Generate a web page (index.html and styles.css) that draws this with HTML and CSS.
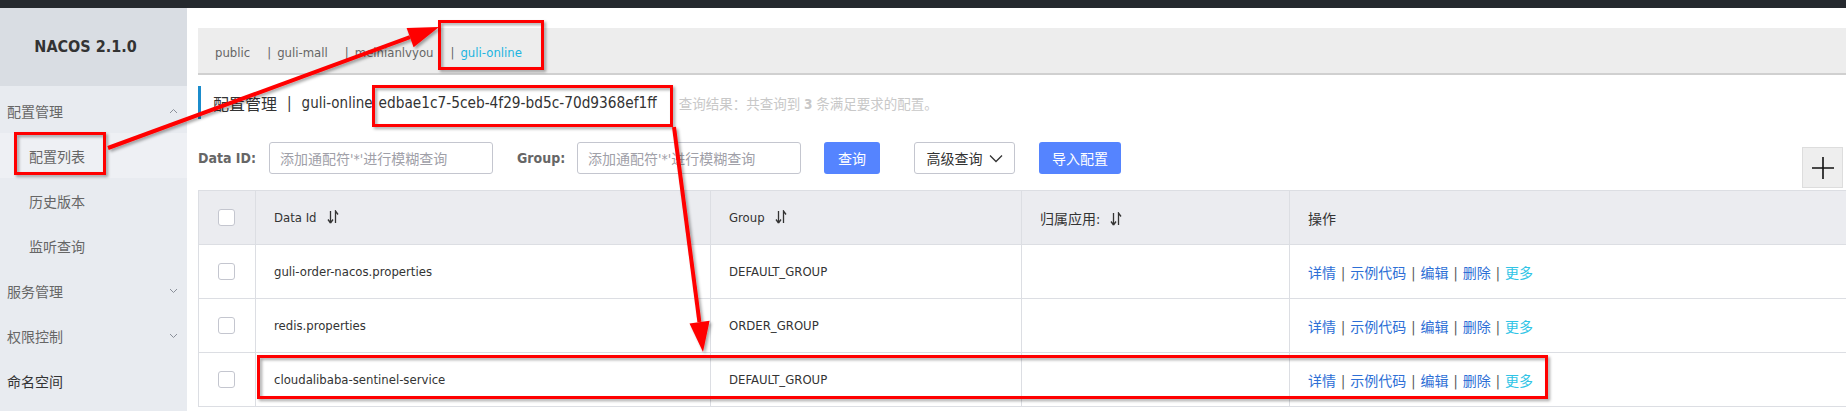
FILE: index.html
```html
<!DOCTYPE html>
<html lang="zh-CN">
<head>
<meta charset="utf-8">
<title>Nacos 配置列表</title>
<link rel="stylesheet" href="styles.css">
</head>
<body>
<div class="topbar"></div>
<div class="layout">
  <aside class="sidebar">
    <div class="logo">NACOS 2.1.0</div>
    <ul class="menu">
      <li class="menu-item"><span>配置管理</span><svg class="chev" width="9" height="6" viewBox="0 0 9 6"><path d="M1 5L4.5 1.5L8 5" fill="none" stroke="#8a8f99" stroke-width="1"/></svg></li>
      <li class="sub-item active">配置列表</li>
      <li class="sub-item">历史版本</li>
      <li class="sub-item">监听查询</li>
      <li class="menu-item"><span>服务管理</span><svg class="chev" width="9" height="6" viewBox="0 0 9 6"><path d="M1 1L4.5 4.5L8 1" fill="none" stroke="#8a8f99" stroke-width="1"/></svg></li>
      <li class="menu-item"><span>权限控制</span><svg class="chev" width="9" height="6" viewBox="0 0 9 6"><path d="M1 1L4.5 4.5L8 1" fill="none" stroke="#8a8f99" stroke-width="1"/></svg></li>
      <li class="menu-item strong"><span>命名空间</span></li>
    </ul>
  </aside>
  <main class="main">
    <div class="ns-tabs">
      <span class="tab">public</span>
      <span class="tab"><span class="sep">|</span>guli-mall</span>
      <span class="tab"><span class="sep">|</span>meihianlvyou</span>
      <span class="tab current"><span class="sep">|</span>guli-online</span>
    </div>
    <div class="page-title">
      <span class="cjk">配置管理</span><span class="title-pipe">|</span><span class="latin">guli-online</span><span class="latin ns-id">edbae1c7-5ceb-4f29-bd5c-70d9368ef1ff</span>
      <span class="result">查询结果：共查询到 <b>3</b> 条满足要求的配置。</span>
    </div>
    <div class="search-row">
      <span class="label label-id">Data ID:</span>
      <span class="input">添加通配符'*'进行模糊查询</span>
      <span class="label label-group">Group:</span>
      <span class="input">添加通配符'*'进行模糊查询</span>
      <span class="btn btn-primary btn-query">查询</span>
      <span class="btn btn-normal btn-advanced">高级查询<svg class="down" width="14" height="9" viewBox="0 0 14 9"><path d="M1 1.5L7 7.5L13 1.5" fill="none" stroke="#333" stroke-width="1.3"/></svg></span>
      <span class="btn btn-primary btn-import">导入配置</span>
      <span class="plus-btn"><svg width="22" height="22" viewBox="0 0 22 22"><path d="M11 0V22M0 11H22" stroke="#111" stroke-width="1.6"/></svg></span>
    </div>
    <table class="config-table">
      <colgroup>
        <col class="c-check"><col class="c-id"><col class="c-group"><col class="c-app"><col class="c-op">
      </colgroup>
      <thead>
        <tr>
          <th><span class="checkbox"></span></th>
          <th>Data Id<svg class="sort" width="12" height="14" viewBox="0 0 12 14"><path d="M3.5 1V13M3.5 13L1 9.5M3.5 13L6 9.5M8.5 13V1L11 4.5" fill="none" stroke="#333" stroke-width="1.3"/></svg></th>
          <th>Group<svg class="sort" width="12" height="14" viewBox="0 0 12 14"><path d="M3.5 1V13M3.5 13L1 9.5M3.5 13L6 9.5M8.5 13V1L11 4.5" fill="none" stroke="#333" stroke-width="1.3"/></svg></th>
          <th class="cjk-cell">归属应用:<svg class="sort" width="12" height="14" viewBox="0 0 12 14"><path d="M3.5 1V13M3.5 13L1 9.5M3.5 13L6 9.5M8.5 13V1L11 4.5" fill="none" stroke="#333" stroke-width="1.3"/></svg></th>
          <th class="cjk-cell">操作</th>
        </tr>
      </thead>
      <tbody>
        <tr>
          <td><span class="checkbox"></span></td>
          <td>guli-order-nacos.properties</td>
          <td>DEFAULT_GROUP</td>
          <td></td>
          <td class="ops"><a>详情</a><span class="bar">|</span><a>示例代码</a><span class="bar">|</span><a>编辑</a><span class="bar">|</span><a>删除</a><span class="bar">|</span><a class="more">更多</a></td>
        </tr>
        <tr>
          <td><span class="checkbox"></span></td>
          <td>redis.properties</td>
          <td>ORDER_GROUP</td>
          <td></td>
          <td class="ops"><a>详情</a><span class="bar">|</span><a>示例代码</a><span class="bar">|</span><a>编辑</a><span class="bar">|</span><a>删除</a><span class="bar">|</span><a class="more">更多</a></td>
        </tr>
        <tr>
          <td><span class="checkbox"></span></td>
          <td>cloudalibaba-sentinel-service</td>
          <td>DEFAULT_GROUP</td>
          <td></td>
          <td class="ops"><a>详情</a><span class="bar">|</span><a>示例代码</a><span class="bar">|</span><a>编辑</a><span class="bar">|</span><a>删除</a><span class="bar">|</span><a class="more">更多</a></td>
        </tr>
      </tbody>
    </table>
  </main>
</div>
<svg class="annotations" width="1846" height="411" viewBox="0 0 1846 411">
  <defs>
    <filter id="shadow" x="-10%" y="-10%" width="120%" height="130%">
      <feDropShadow dx="2" dy="2" stdDeviation="1.5" flood-color="#000" flood-opacity="0.35"/>
    </filter>
  </defs>
  <g filter="url(#shadow)" fill="none" stroke="#ff0000" stroke-width="3">
    <rect x="439.5" y="21.5" width="103" height="47"/>
    <rect x="15.5" y="133.5" width="89" height="40"/>
    <rect x="373.5" y="86.5" width="298" height="39"/>
    <rect x="258.5" y="356.5" width="1288" height="41"/>
    <path d="M108 148L410 37.2" stroke-width="4"/>
    <path d="M674 127L699.4 322" stroke-width="4"/>
  </g>
  <g filter="url(#shadow)" fill="#ff0000">
    <polygon points="439,27 413.6,47.2 406.6,27.9"/>
    <polygon points="703,352 709.6,320.8 689.5,323.4"/>
  </g>
</svg>
</body>
</html>
```

FILE: styles.css
```css
* { box-sizing: border-box; }
html, body { margin: 0; padding: 0; }
body {
  width: 1846px;
  height: 411px;
  overflow: hidden;
  position: relative;
  background: #fff;
  color: #333;
  font-family: "DejaVu Sans", "Noto Sans CJK SC", sans-serif;
  font-stretch: condensed;
  font-size: 13px;
}
.topbar { height: 8px; background: #25292e; }
.layout { display: flex; height: 403px; }

/* sidebar */
.sidebar { width: 187px; flex: none; background: #e8ebf0; }
.logo {
  height: 78px;
  background: #d9dde3;
  display: flex;
  align-items: center;
  justify-content: center;
  padding: 0 16px 2px 0;
  font-weight: bold;
  font-size: 16px;
  color: #333;
}
.menu { list-style: none; margin: 0; padding: 2px 0 0; font-size: 14px; }
.menu li { height: 45px; display: flex; align-items: center; color: #666; }
.menu-item { padding-left: 7px; padding-right: 9px; justify-content: space-between; }
.menu-item.strong { color: #333; }
.sub-item { padding-left: 29px; }
.sub-item.active { background: #eef0f4; }

/* main */
.main { flex: 1; min-width: 0; padding-left: 11px; overflow: hidden; }
.ns-tabs {
  margin-top: 20px;
  height: 47px;
  background: #ededed;
  border-bottom: 2px solid #d0d0d0;
  display: flex;
  align-items: center;
  padding: 3px 0 0 17px;
  color: #666;
}
.tab + .tab { margin-left: 17px; }
.sep { margin-right: 6px; color: #666; }
.tab.current { color: #22b4e0; }
.tab.current .sep { color: #666; }

.page-title {
  margin-top: 11px;
  height: 33px;
  border-left: 3px solid #1b8ccc;
  padding-left: 12px;
  display: flex;
  align-items: center;
  color: #333;
}
.page-title .cjk { font-size: 16px; }
.page-title .latin { font-size: 15px; }
.page-title .ns-id { font-size: 15.25px; margin-left: 6px; }
.title-pipe { margin: 0 10px; font-size: 15px; }
.result { margin-left: 22px; font-size: 13.5px; color: #c8c8c8; }

.search-row { margin-top: 23px; display: flex; align-items: flex-start; }
.label {
  height: 32px;
  line-height: 32px;
  font-weight: bold;
  font-size: 14px;
  color: #666;
}
.label-id { width: 71px; }
.label-group { width: 60px; margin-left: 24px; }
.input {
  width: 224px;
  height: 32px;
  border: 1px solid #c4c6cf;
  border-radius: 3px;
  padding-left: 10px;
  display: flex;
  align-items: center;
  font-size: 14px;
  color: #a0a0a8;
}
.btn {
  height: 32px;
  border-radius: 3px;
  display: flex;
  align-items: center;
  justify-content: center;
  font-size: 14px;
}
.btn-primary { background: #5584ff; color: #fff; }
.btn-query { width: 56px; margin-left: 23px; }
.btn-normal { border: 1px solid #c4c6cf; background: #fff; color: #333; }
.btn-advanced { width: 101px; margin-left: 34px; }
.btn-advanced .down { margin-left: 6px; }
.btn-import { width: 82px; margin-left: 24px; }
.plus-btn {
  margin-left: auto;
  margin-right: 3px;
  margin-top: 5px;
  width: 41px;
  height: 41px;
  background: #eeeeee;
  border: 1px solid #dddddd;
  display: flex;
  align-items: center;
  justify-content: center;
}

/* table */
.config-table {
  margin-top: 2px;
  border-collapse: collapse;
  table-layout: fixed;
  width: 1648px;
}
.c-check { width: 57px; }
.c-id { width: 455px; }
.c-group { width: 311px; }
.c-app { width: 268px; }
.c-op { width: 557px; }
.config-table th,
.config-table td {
  height: 54px;
  padding: 0 18px;
  border: 1px solid #dcdee3;
  text-align: left;
  font-weight: normal;
  color: #333;
  white-space: nowrap;
}
.config-table th { background: #ebecf0; }
.config-table .cjk-cell { font-size: 14px; }
.config-table th:first-child,
.config-table td:first-child { padding: 0 0 0 19px; }
.checkbox {
  display: block;
  width: 17px;
  height: 17px;
  border: 1px solid #c4c6cf;
  border-radius: 3px;
  background: #fff;
}
.sort { margin-left: 10px; vertical-align: -2px; }
.config-table td.ops { font-size: 14px; }
.ops a { color: #2d6fd6; margin-right: 5px; }
.ops a.more { color: #2fc4e6; }
.ops .bar { margin-right: 5px; color: #555; }

.annotations { position: absolute; left: 0; top: 0; pointer-events: none; }
```
